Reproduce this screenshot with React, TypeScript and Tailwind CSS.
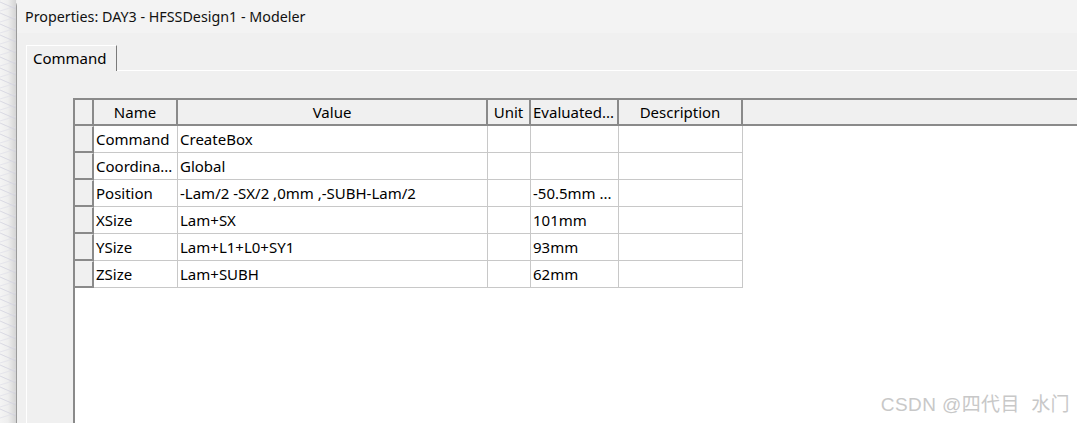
import React from "react";

const cols = [84, 310, 43, 88, 124];
const headers = ["Name", "Value", "Unit", "Evaluated...", "Description"];
const rows: string[][] = [
  ["Command", "CreateBox", "", ""],
  ["Coordina...", "Global", "", ""],
  ["Position", "-Lam/2 -SX/2 ,0mm ,-SUBH-Lam/2", "", "-50.5mm ..."],
  ["XSize", "Lam+SX", "", "101mm"],
  ["YSize", "Lam+L1+L0+SY1", "", "93mm"],
  ["ZSize", "Lam+SUBH", "", "62mm"],
];

function Viewport() {
  const lines = [];
  for (let i = 0; i < 40; i++) {
    const y = i * 11 - 20;
    lines.push(
      <line key={"a" + i} x1={0} y1={y} x2={16} y2={y + 7} stroke="#cfcfdd" strokeWidth={0.7} />
    );
    lines.push(
      <line key={"b" + i} x1={0} y1={y + 9} x2={16} y2={y + 4} stroke="#dcdce6" strokeWidth={0.6} />
    );
  }
  return (
    <div className="relative w-[16px] h-full shrink-0 bg-gradient-to-r from-[#f4f4f4] via-[#eeeeee] to-[#d4d4d4]">
      <svg width="16" height="423" className="absolute inset-0">
        {lines}
      </svg>
    </div>
  );
}

export default function App() {
  return (
    <div
      className="relative flex w-[1077px] h-[423px] overflow-hidden bg-[#f0f0f0] text-black"
      style={{ fontFamily: '"Noto Sans", "Noto Sans CJK SC", sans-serif' }}
    >
      <Viewport />
      <div className="flex-1 flex flex-col border-l border-[#9a9a9a] rounded-tl-[6px] bg-[#f0f0f0] min-w-0">
        <div className="h-[33px] shrink-0 bg-[#f3f3f3] flex items-center pl-[8px] text-[14.3px] text-[#111]">
          Properties: DAY3 - HFSSDesign1 - Modeler
        </div>
        <div className="flex-1 flex flex-col pl-[9px] pt-[12px]">
          <div className="flex h-[26px] shrink-0">
            <div className="w-[91px] h-[26px] border-l border-t border-white border-r border-r-[#7a7a7a] bg-[#f0f0f0] flex items-center pl-[6px] text-[15px] text-black">
              Command
            </div>
            <div className="flex-1 border-b border-white" />
          </div>
          <div className="flex-1 border-l border-white pl-[46px] pt-[27px] flex flex-col">
            <div className="flex-1 flex flex-col border-l-2 border-t-2 border-[#8a8a8a] bg-white">
              <div className="flex h-[26px] shrink-0 bg-[#f0f0f0] border-b-2 border-[#8a8a8a] text-[15px] text-black">
                <div className="w-[19px] shrink-0 border-r-2 border-[#8a8a8a]" />
                {headers.map((h, i) => (
                  <div
                    key={h}
                    style={{ width: cols[i] }}
                    className={`shrink-0 border-r-2 border-[#8a8a8a] flex items-center ${
                      i === 3 ? "justify-start pl-[2px]" : "justify-center"
                    }`}
                  >
                    {h}
                  </div>
                ))}
                <div className="flex-1" />
              </div>
              {rows.map((r) => (
                <div key={r[0]} className="flex h-[27px] shrink-0 text-[15px] text-black">
                  <div className="w-[19px] shrink-0 bg-[#f0f0f0] border-r-2 border-b-2 border-[#8a8a8a] border-t border-t-[#f0f0f0]" />
                  {cols.map((w, i) => {
                    const text =
                      i === 0 ? r[0] : i === 1 ? r[1] : i === 2 ? r[2] : i === 3 ? r[3] : "";
                    return (
                      <div
                        key={i}
                        style={{ width: w }}
                        className="shrink-0 border-r border-b border-[#c8c8c8] flex items-center pl-[2px] whitespace-nowrap overflow-hidden"
                      >
                        {text}
                      </div>
                    );
                  })}
                </div>
              ))}
              <div className="flex-1" />
            </div>
          </div>
        </div>
      </div>
      <div
        className="absolute right-[7px] bottom-[4px] text-[19px] text-[#c8c8c8] tracking-[0.4px]"
        style={{ fontFamily: '"Liberation Sans", "Noto Sans CJK SC", sans-serif' }}
      >
        CSDN @四代目&nbsp;&nbsp;水门
      </div>
    </div>
  );
}
